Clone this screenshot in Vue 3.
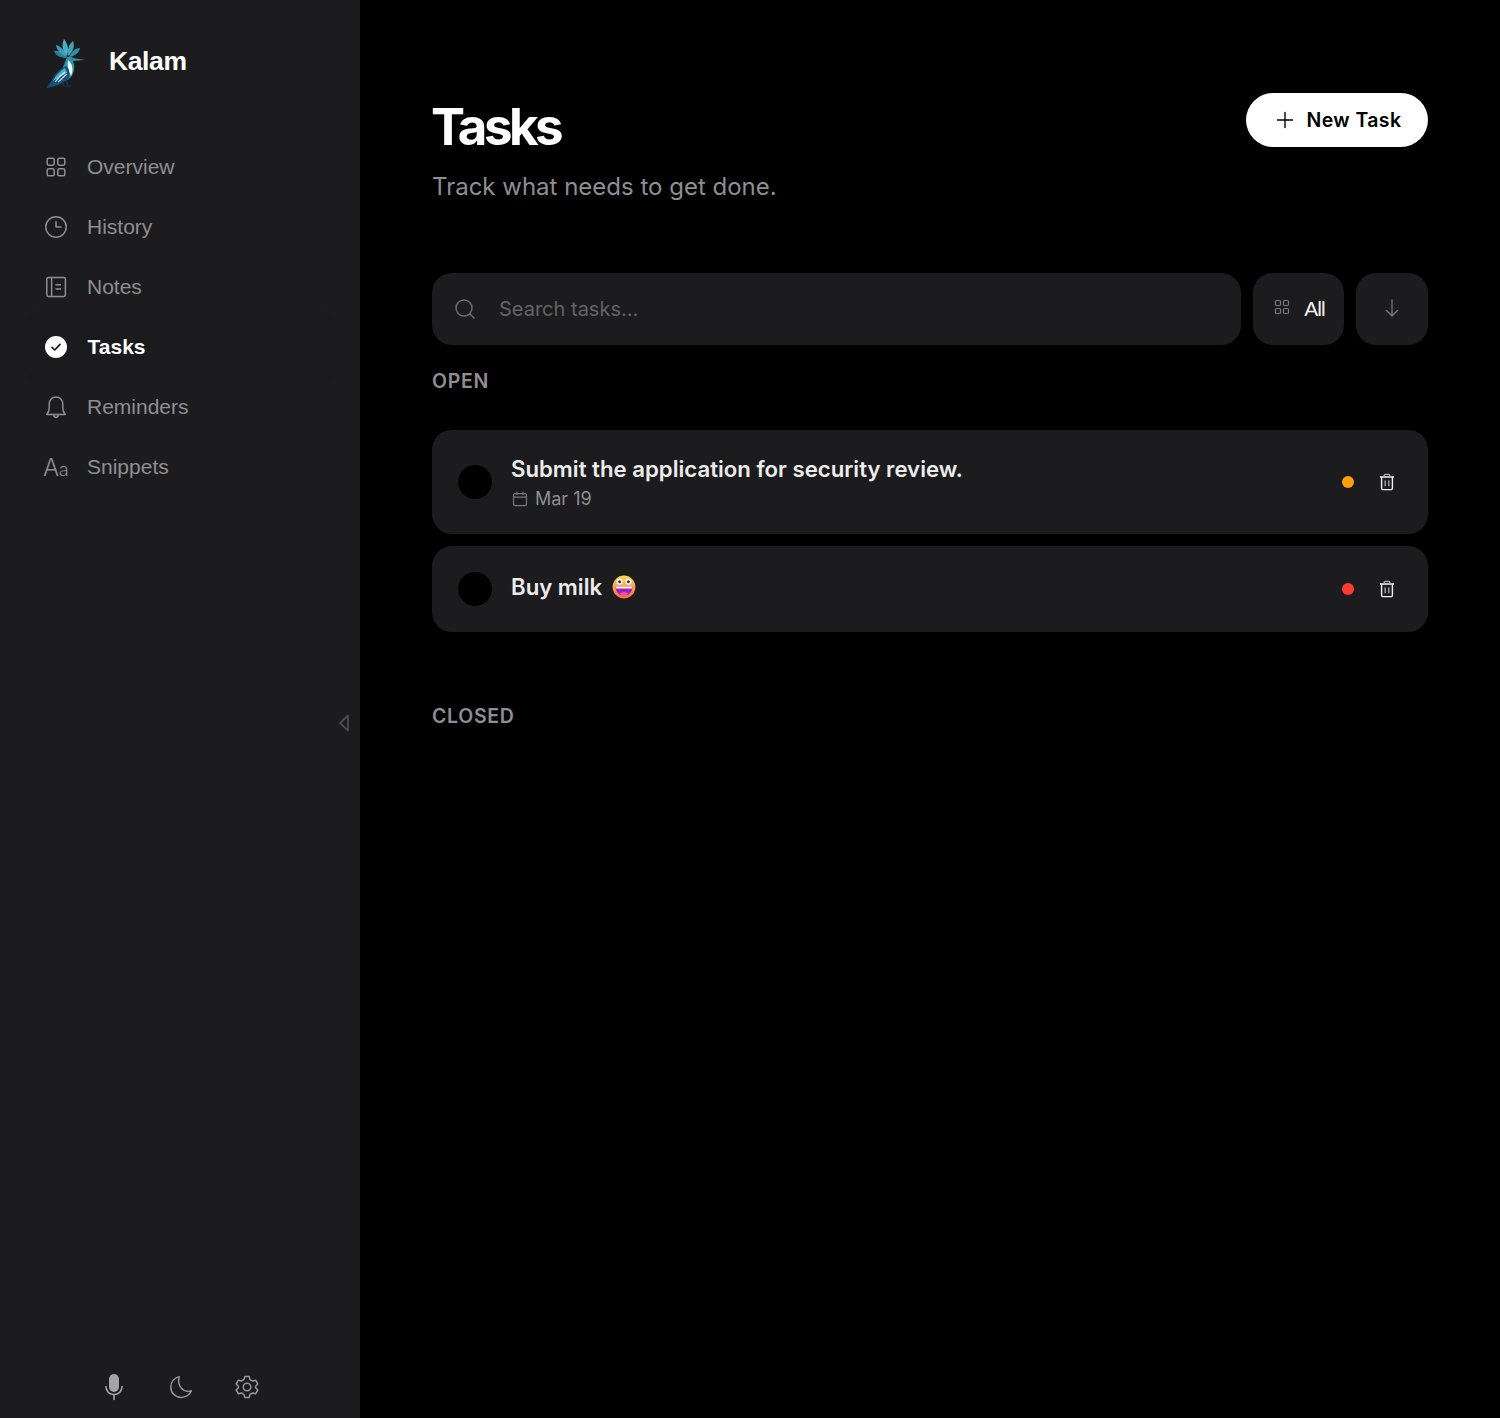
<script setup>
import { ref } from 'vue'

const navItems = [
  { id: 'overview', label: 'Overview', icon: 'grid' },
  { id: 'history', label: 'History', icon: 'clock' },
  { id: 'notes', label: 'Notes', icon: 'notes' },
  { id: 'tasks', label: 'Tasks', icon: 'check' },
  { id: 'reminders', label: 'Reminders', icon: 'bell' },
  { id: 'snippets', label: 'Snippets', icon: 'text' },
]

const active = ref('tasks')
const search = ref('')
</script>

<template>
  <div class="app">
    <aside class="sidebar">
      <div class="brand">
        <svg class="logo" width="44" height="54" viewBox="0 0 44 54" fill="none">
          <path d="M23 23C17 23 12 21 10 16C15 15 20 18 23 23Z" fill="#2a7f98" />
          <path d="M23 22C18 20 13 16 12 10C17 11 21 16 23 22Z" fill="#3a9db5" />
          <path d="M23 21C19 17 17 10 20 4C24 9 25 15 23 21Z" fill="#4bb0c6" />
          <path d="M24 21C23 15 25 9 29 6C31 11 29 17 24 21Z" fill="#3fa3ba" />
          <path d="M25 22C27 17 31 13 36 13C35 18 31 21 25 22Z" fill="#2f8fa8" />
          <path d="M22 24C23 21 27 21 29 23L41 25L29 26C31 31 31 37 27 42C24 45 20 47 14 47C15 39 20 31 22 24Z" fill="#2b91a9" />
          <path d="M24 25C28 28 30 34 27 41C24 36 23 30 24 25Z" fill="#eef7f8" />
          <path d="M22 31C15 34 9 41 7 47L2 53C10 52 19 49 25 43C26 38 25 33 22 31Z" fill="#15507a" />
          <path d="M21 33C16 36 12 40 9 46L23 38Z" fill="#4bb0c6" />
          <path d="M21 37C17 40 14 43 11 47M23 39C19 42 17 45 14 47" stroke="#e2f2f5" stroke-width="1.1" />
          <path d="M18 47L20 51H27M22 46L24 50" stroke="#123a5c" stroke-width="1.2" />
        </svg>
        <span class="brand-name">Kalam</span>
      </div>

      <nav class="nav">
        <a
          v-for="item in navItems"
          :key="item.id"
          :class="['nav-item', { active: active === item.id }]"
          @click="active = item.id"
        >
          <span class="nav-icon">
            <svg v-if="item.icon === 'grid'" width="24" height="24" viewBox="0 0 24 24" fill="none" stroke="currentColor" stroke-width="1.5">
              <rect x="3.2" y="3.2" width="7" height="7" rx="1.4" />
              <rect x="13.8" y="3.2" width="7" height="7" rx="1.4" />
              <rect x="3.2" y="13.8" width="7" height="7" rx="1.4" />
              <rect x="13.8" y="13.8" width="7" height="7" rx="1.4" />
            </svg>
            <svg v-else-if="item.icon === 'clock'" width="24" height="24" viewBox="0 0 24 24" fill="none" stroke="currentColor" stroke-width="1.5" stroke-linecap="round" stroke-linejoin="round">
              <circle cx="12" cy="12" r="10.2" />
              <path d="M12 6.5V12H17" />
            </svg>
            <svg v-else-if="item.icon === 'notes'" width="24" height="24" viewBox="0 0 24 24" fill="none" stroke="currentColor" stroke-width="1.5" stroke-linejoin="round">
              <rect x="2.8" y="2.6" width="18.6" height="18.8" rx="1.6" />
              <path d="M7.6 2.6V21.4M11.5 9.8H17M11.5 14H17" />
            </svg>
            <svg v-else-if="item.icon === 'check'" width="24" height="24" viewBox="0 0 24 24" fill="none">
              <circle cx="12" cy="12" r="11" fill="#fff" />
              <path d="M8 12.4L10.8 15L16 9.4" stroke="#1c1c1e" stroke-width="1.7" stroke-linecap="round" stroke-linejoin="round" />
            </svg>
            <svg v-else-if="item.icon === 'bell'" width="24" height="24" viewBox="0 0 24 24" fill="none" stroke="currentColor" stroke-width="1.5" stroke-linecap="round" stroke-linejoin="round">
              <path d="M2.8 19.4C4.6 17.6 5.2 15.6 5.2 13V9.2C5.2 5 8 2 12 2S18.8 5 18.8 9.2V13C18.8 15.6 19.4 17.6 21.2 19.4Z" />
              <path d="M9.6 19.6C9.8 21.6 10.8 22.4 12 22.4S14.2 21.6 14.4 19.6" />
            </svg>
            <span v-else class="aa">A<small>a</small></span>
          </span>
          <span class="nav-label">{{ item.label }}</span>
        </a>
      </nav>

      <svg class="collapse" width="12" height="18" viewBox="0 0 12 18" fill="none" stroke="#4a4a4d" stroke-width="1.8" stroke-linejoin="round">
        <path d="M10 1.5V16.5L2 9Z" />
      </svg>

      <div class="sidebar-foot">
        <svg width="24" height="28" viewBox="0 0 24 28" fill="none">
          <rect x="7" y="1" width="10" height="18" rx="5" fill="#a3a3a8" />
          <path d="M4 13.5C4 18.5 7.5 21.5 12 21.5S20 18.5 20 13.5M12 21.5V26.5" stroke="#a3a3a8" stroke-width="1.6" stroke-linecap="round" />
        </svg>
        <svg width="24" height="24" viewBox="0 0 24 24" fill="none" stroke="#98989c" stroke-width="1.5" stroke-linejoin="round">
          <path d="M10.2 1.6C5.2 3 1.8 7.2 1.8 12.2C1.8 18 6.5 22.4 12.2 22.4C16.8 22.4 20.6 20 22.4 15.8C15.4 18.4 7.4 11.6 10.2 1.6Z" />
        </svg>
        <svg width="24" height="24" viewBox="0 0 24 24" fill="none" stroke="#98989c" stroke-width="1.5" stroke-linejoin="round">
          <circle cx="12" cy="12" r="3.8" />
          <path d="M9.8 1.6H14.2L15 4.6L17.6 6L20.6 5.2L22.8 9L20.6 11.2V12.8L22.8 15L20.6 18.8L17.6 18L15 19.4L14.2 22.4H9.8L9 19.4L6.4 18L3.4 18.8L1.2 15L3.4 12.8V11.2L1.2 9L3.4 5.2L6.4 6L9 4.6Z" />
        </svg>
      </div>
    </aside>

    <main class="main">
      <header class="page-head">
        <div>
          <h1>Tasks</h1>
          <p class="subtitle">Track what needs to get done.</p>
        </div>
        <button class="new-task" type="button">
          <svg width="20" height="20" viewBox="0 0 20 20" fill="none" stroke="#000" stroke-width="1.4" stroke-linecap="round">
            <path d="M10 2.5V17.5M2.5 10H17.5" />
          </svg>
          New Task
        </button>
      </header>

      <div class="toolbar">
        <label class="search">
          <svg width="24" height="24" viewBox="0 0 24 24" fill="none" stroke="#6d6d70" stroke-width="1.5" stroke-linecap="round">
            <circle cx="11" cy="11" r="8" />
            <path d="M17 17L21 21" />
          </svg>
          <input v-model="search" type="text" placeholder="Search tasks..." />
        </label>
        <button class="tool filter" type="button">
          <svg width="16" height="16" viewBox="0 0 16 16" fill="none" stroke="#77777a" stroke-width="1.2">
            <rect x="1.5" y="1.5" width="5" height="5" rx="1" />
            <rect x="9.5" y="1.5" width="5" height="5" rx="1" />
            <rect x="1.5" y="9.5" width="5" height="5" rx="1" />
            <rect x="9.5" y="9.5" width="5" height="5" rx="1" />
          </svg>
          <span>All</span>
        </button>
        <button class="tool sort" type="button">
          <svg width="18" height="18" viewBox="0 0 18 18" fill="none" stroke="#77777a" stroke-width="1.3" stroke-linecap="round" stroke-linejoin="round">
            <path d="M9 1V17M3.5 11.5L9 17L14.5 11.5" />
          </svg>
        </button>
      </div>

      <section class="group">
        <h2>OPEN</h2>
        <div class="task-list">
          <article class="task">
            <span class="task-check"></span>
            <div class="task-body">
              <div class="task-title">Submit the application for security review.</div>
              <div class="task-date">
                <svg width="16" height="16" viewBox="0 0 16 16" fill="none" stroke="#77777a" stroke-width="1.2" stroke-linecap="round">
                  <rect x="1.5" y="2.6" width="13" height="12" rx="1.6" />
                  <path d="M1.5 6.2H14.5M5 1V3.6M11 1V3.6" />
                </svg>
                Mar 19
              </div>
            </div>
            <span class="priority orange"></span>
            <svg class="trash" width="16" height="18" viewBox="0 0 16 18" fill="none" stroke="#f2f2f2" stroke-width="1.4" stroke-linejoin="round">
              <path d="M1 4H15M2.6 4V15.6C2.6 16.2 3 16.6 3.6 16.6H12.4C13 16.6 13.4 16.2 13.4 15.6V4" />
              <path d="M5.2 4V2.4C5.2 1.8 5.6 1.4 6.2 1.4H9.8C10.4 1.4 10.8 1.8 10.8 2.4V4" stroke="#a8a8a8" />
              <path d="M6.2 7.4V13.2M9.8 7.4V13.2" stroke="#a8a8a8" />
            </svg>
          </article>

          <article class="task short">
            <span class="task-check"></span>
            <div class="task-body">
              <div class="task-title">
                Buy milk
                <svg class="emoji" width="24" height="24" viewBox="0 0 24 24">
                  <defs>
                    <linearGradient id="face" x1="0" y1="0" x2="0" y2="1">
                      <stop offset="0" stop-color="#ffd65a" />
                      <stop offset="1" stop-color="#f9703f" />
                    </linearGradient>
                  </defs>
                  <circle cx="12" cy="12" r="11.4" fill="url(#face)" />
                  <circle cx="7.6" cy="6.8" r="3" fill="#fff" />
                  <circle cx="16.4" cy="6.8" r="3" fill="#fff" />
                  <circle cx="7.6" cy="6.8" r="1.5" fill="#4b2a2a" />
                  <circle cx="16.4" cy="6.8" r="1.5" fill="#4b2a2a" />
                  <path d="M3.6 11.4H20.4C20.4 17.6 16.8 20.4 12 20.4S3.6 17.6 3.6 11.4Z" fill="#a51fb5" />
                  <path d="M3.7 11.4H20.3L19.9 13.6H4.1Z" fill="#fff" />
                  <path d="M7.8 18.6C9.6 16.8 14.4 16.8 16.2 18.6C14.6 20.6 9.4 20.6 7.8 18.6Z" fill="#f0569a" />
                </svg>
              </div>
            </div>
            <span class="priority red"></span>
            <svg class="trash" width="16" height="18" viewBox="0 0 16 18" fill="none" stroke="#f2f2f2" stroke-width="1.4" stroke-linejoin="round">
              <path d="M1 4H15M2.6 4V15.6C2.6 16.2 3 16.6 3.6 16.6H12.4C13 16.6 13.4 16.2 13.4 15.6V4" />
              <path d="M5.2 4V2.4C5.2 1.8 5.6 1.4 6.2 1.4H9.8C10.4 1.4 10.8 1.8 10.8 2.4V4" stroke="#a8a8a8" />
              <path d="M6.2 7.4V13.2M9.8 7.4V13.2" stroke="#a8a8a8" />
            </svg>
          </article>
        </div>
      </section>

      <section class="group closed">
        <h2>CLOSED</h2>
      </section>
    </main>
  </div>
</template>

<style scoped>
.app {
  display: flex;
  height: 1418px;
  background: #000;
  font-family: Inter, 'Liberation Sans', sans-serif;
  overflow: hidden;
}

.sidebar {
  position: relative;
  display: flex;
  flex-direction: column;
  width: 360px;
  flex-shrink: 0;
  background: #1c1c1e;
  box-sizing: border-box;
  padding: 35px 24px 15px;
}

.brand {
  display: flex;
  align-items: center;
  gap: 21px;
  padding-left: 20px;
  height: 54px;
}

.logo {
  flex-shrink: 0;
}

.brand-name {
  margin-top: -1px;
  font-family: 'Liberation Sans', Inter, sans-serif;
  font-size: 26.5px;
  font-weight: 700;
  color: #fff;
  letter-spacing: -0.4px;
}

.nav {
  display: flex;
  flex-direction: column;
  margin-top: 48px;
  flex: 1;
}

.nav-item {
  display: flex;
  align-items: center;
  gap: 19.5px;
  height: 60px;
  padding-left: 19.5px;
  border-radius: 16px;
  color: #8e8e93;
  font-family: 'Liberation Sans', Inter, sans-serif;
  font-size: 21px;
  cursor: pointer;
}

.nav-item.active {
  color: #fff;
  font-weight: 700;
  background: #1b1b1d;
  box-shadow: 0 0 8px rgba(0, 0, 0, 0.1);
}

.nav-item.active .nav-label {
  margin-left: 0.5px;
}

.nav-icon {
  display: flex;
  align-items: center;
  justify-content: center;
  width: 24px;
  height: 24px;
  flex-shrink: 0;
}

.aa {
  font-family: Inter, sans-serif;
  font-size: 24px;
  font-weight: 300;
  white-space: nowrap;
  letter-spacing: -0.5px;
}

.aa small {
  font-size: 18px;
}

.collapse {
  position: absolute;
  right: 10px;
  top: 714px;
}

.sidebar-foot {
  display: flex;
  justify-content: center;
  align-items: center;
  gap: 42px;
  height: 32px;
}

.sidebar-foot svg:first-child {
  margin-right: 1px;
}

.main {
  flex: 1;
  min-width: 0;
  padding: 93px 72px 0;
}

.page-head {
  display: flex;
  justify-content: space-between;
  align-items: flex-start;
}

h1 {
  margin: 0 0 0 -1px;
  font-size: 51px;
  line-height: 67px;
  font-weight: 700;
  color: #fff;
  letter-spacing: -3.5px;
}

.subtitle {
  margin: 12px 0 0;
  font-size: 24px;
  line-height: 30px;
  color: #8e8e93;
}

.new-task {
  display: flex;
  align-items: center;
  justify-content: center;
  gap: 12px;
  width: 182px;
  height: 54px;
  padding: 0 0 0 2px;
  border: none;
  border-radius: 27px;
  background: #fff;
  color: #000;
  font-family: inherit;
  font-size: 19.5px;
  font-weight: 600;
  letter-spacing: 0.4px;
  cursor: pointer;
}

.toolbar {
  display: flex;
  gap: 12px;
  margin-top: 71px;
}

.search {
  display: flex;
  align-items: center;
  gap: 20px;
  flex: 1;
  height: 72px;
  padding-left: 21px;
  border-radius: 20px;
  background: #1c1c1e;
}

.search input {
  flex: 1;
  min-width: 0;
  border: none;
  outline: none;
  background: none;
  color: #fff;
  font-family: inherit;
  font-size: 20px;
}

.search input::placeholder {
  color: #636366;
  opacity: 1;
}

.tool {
  display: flex;
  align-items: center;
  justify-content: center;
  height: 72px;
  padding: 0;
  border: none;
  border-radius: 20px;
  background: #1c1c1e;
  cursor: pointer;
}

.filter {
  width: 91px;
  gap: 14px;
  padding-left: 2px;
  color: #f2f2f2;
  font-family: 'Liberation Sans', sans-serif;
  font-size: 21px;
  letter-spacing: -1px;
}

.filter svg {
  margin-bottom: 4px;
}

.sort {
  width: 72px;
}

.sort svg {
  margin-bottom: 2px;
}

.group h2 {
  margin: 24px 0 0;
  font-size: 19.5px;
  line-height: 24px;
  font-weight: 600;
  color: #8e8e93;
  letter-spacing: 0.7px;
}

.task-list {
  display: flex;
  flex-direction: column;
  gap: 12px;
  margin-top: 37px;
}

.task {
  display: flex;
  align-items: center;
  height: 104px;
  padding: 0 33px 0 26px;
  box-sizing: border-box;
  border-radius: 20px;
  background: #1c1c1e;
}

.task.short {
  height: 86px;
}

.task-check {
  width: 34px;
  height: 34px;
  border-radius: 50%;
  background: #000;
  flex-shrink: 0;
}

.task-body {
  flex: 1;
  min-width: 0;
  margin-left: 19px;
}

.task-title {
  display: flex;
  align-items: center;
  gap: 10px;
  font-size: 22.2px;
  line-height: 30px;
  font-weight: 600;
  color: #ececec;
}

.short .task-title {
  margin-top: -4px;
}

.task-date {
  display: flex;
  align-items: center;
  gap: 7px;
  margin-top: 3px;
  padding-left: 1px;
  font-size: 18px;
  line-height: 24px;
  color: #8e8e93;
}

.priority {
  width: 12px;
  height: 12px;
  border-radius: 50%;
  flex-shrink: 0;
  margin-right: 25px;
}

.priority.orange {
  background: #ff9f0a;
}

.priority.red {
  background: #ff3b30;
}

.trash {
  flex-shrink: 0;
}

.closed h2 {
  margin-top: 72px;
}
</style>
